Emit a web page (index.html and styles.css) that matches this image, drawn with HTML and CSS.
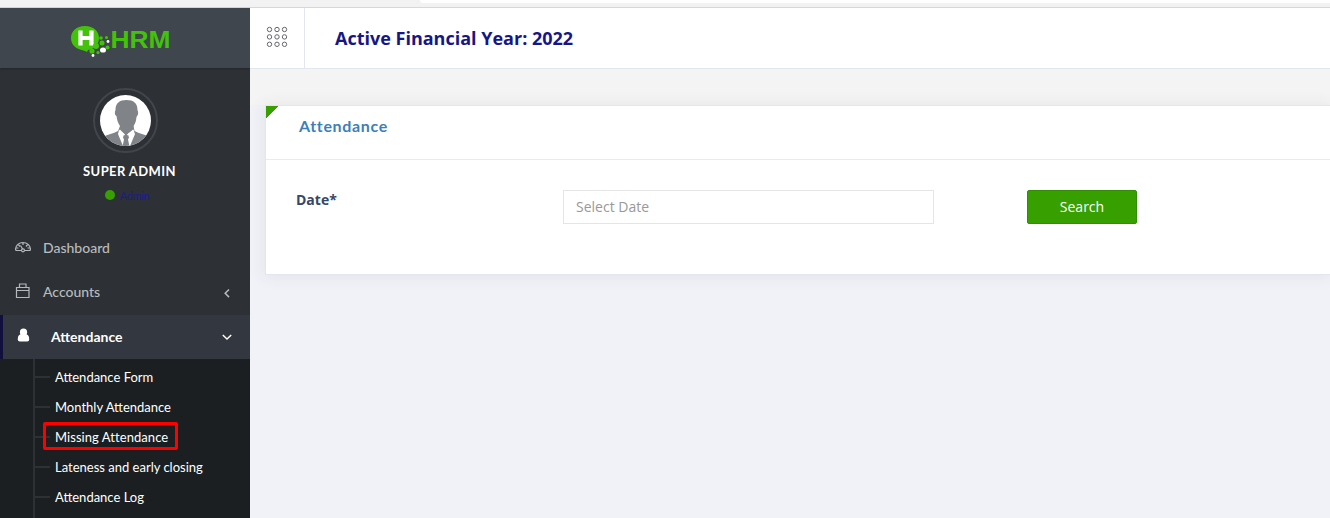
FILE: index.html
```html
<!DOCTYPE html>
<html lang="en">
<head>
<meta charset="utf-8">
<title>HRM - Attendance</title>
<link rel="stylesheet" href="styles.css">
</head>
<body>
<div class="browser-edge"><span class="address-bar"></span></div>
<div class="app">
  <aside class="sidebar">
    <div class="logo">
      <svg width="102" height="36" viewBox="0 0 102 36">
        <path fill="#43c20a" d="M15 2C6.500 2 1 7 1 14c0 6 4 10 9 11.500l5 1.500 2 1 1-2c6-1 11-5 11-12C29 7 23.500 2 15 2z"/>
        <path stroke="#fff" stroke-width="4.200" fill="none" d="M10.500 6.500v15M21.500 6.500v15M10 14h11"/>
        <g fill="#43c20a"><circle cx="31" cy="14" r="1.800"/><circle cx="36.500" cy="13.500" r="1.500"/><circle cx="32" cy="19" r="2.500"/><circle cx="26" cy="22" r="3"/><circle cx="37.500" cy="23.500" r="2"/><circle cx="22" cy="27" r="2.600"/><circle cx="28" cy="28.500" r="1.600"/></g>
        <g fill="#fff"><ellipse cx="33" cy="26" rx="3" ry="2.600"/><circle cx="38" cy="17.500" r="1.400"/><circle cx="23" cy="31.500" r="1.400"/></g>
        <text class="logo-text" x="40.500" y="31.500" textLength="60" lengthAdjust="spacingAndGlyphs" transform="translate(0 -8)">HRM</text>
      </svg>
    </div>
    <div class="profile">
      <div class="avatar">
        <svg width="51" height="51" viewBox="0 0 51 51">
          <defs><clipPath id="face"><circle cx="25.500" cy="25.500" r="25.500"/></clipPath></defs>
          <g clip-path="url(#face)">
            <path fill="#fff" d="M0 0h51v51H0z"/>
            <path fill="#808388" d="M3 42c5-3 10-3 15-6l2-5c-2-3-3-6-3.500-10C14 20 15 16 15.500 15c0-7 4-10 11-10S37.500 8 37.500 15c1 2 1 5-1 7-.5 4-1 6-3 9l1 5c5 3 10 3 15 6v9H3z"/>
            <path fill="#fff" d="M19 35l6.500 5 8-5 1.500 4-5 12h-7l-5-12z"/>
            <path fill="#808388" d="M20 30h13.500l-.5 5-7 5-6-5zM24 39.500h4l1 3-1 2 1.500 7h-7l1.500-7-1-2z"/>
            <path stroke="#fff" stroke-width="1.200" fill="none" d="M19.500 35l5 5M33.500 35l-6 5"/>
          </g>
        </svg>
      </div>
      <div class="name"><span>SUPER ADMIN</span></div>
      <div class="role"><i class="dot"></i><span>Admin</span></div>
    </div>
    <nav class="menu">
      <a class="item"><svg class="icon" width="18" height="16" viewBox="0 0 18 16"><g fill="none" stroke="#b5b9bd" stroke-width="1.200"><path d="M7.200 10.500H2L1.500 9C1.700 5.300 5 2.500 9 2.500s7.300 2.800 7.500 6.500l-.5 1.500h-5.200M9 2.500v2.500M4.300 4.500L6 6.500M13.700 4.500L12 6.500M1.800 8H4.500M16.200 8h-2.700M6.500 5.500L8.600 9"/><circle cx="9" cy="10.300" r="1.500"/></g></svg><span class="text">Dashboard</span></a>
      <a class="item"><svg class="icon raised" width="18" height="16" viewBox="0 0 18 16"><path fill="none" stroke="#b5b9bd" stroke-width="1.200" d="M2.500 4.500h12.500v10H2.500zM2.500 7.500h12.500M5.500 4.500v-3.500h6.500v3.500"/></svg><span class="text">Accounts</span><svg class="arrow" width="10" height="10" viewBox="0 0 10 10"><path d="M7 1.500L3.200 5.300 7 9.100"/></svg></a>
      <a class="item active"><svg class="icon raised" width="18" height="16" viewBox="0 0 18 16"><circle cx="8.500" cy="5.200" r="3.600" fill="#fff"/><path fill="#fff" d="M5.500 7.300C3.500 8 2.800 9.500 2.800 12.500q0 2 2 2h7.400q2 0 2-2c0-3-.7-4.500-2.700-5.200z"/></svg><span class="text">Attendance</span><svg class="arrow" width="10" height="10" viewBox="0 0 10 10"><path d="M.8 3L5 7 9.200 3"/></svg></a>
    </nav>
    <ul class="submenu">
      <li>Attendance Form</li>
      <li>Monthly Attendance</li>
      <li class="marked">Missing Attendance</li>
      <li>Lateness and early closing</li>
      <li>Attendance Log</li>
    </ul>
  </aside>
  <main class="main">
    <header class="topbar">
      <div class="toggle">
        <svg width="22" height="22" viewBox="0 0 22 22" fill="none" stroke="#64666b" stroke-width="1"><circle cx="3.500" cy="3.500" r="2.200"/><circle cx="11" cy="3.500" r="2.200"/><circle cx="18.500" cy="3.500" r="2.200"/><circle cx="3.500" cy="10.900" r="2.200"/><circle cx="11" cy="10.900" r="2.200"/><circle cx="18.500" cy="10.900" r="2.200"/><circle cx="3.500" cy="18.300" r="2.200"/><circle cx="11" cy="18.300" r="2.200"/><circle cx="18.500" cy="18.300" r="2.200"/></svg>
      </div>
      <div class="year">Active Financial Year: 2022</div>
    </header>
    <div class="spacer"></div>
    <section class="card">
      <h4 class="card-head"><span>Attendance</span></h4>
      <div class="form">
        <label class="label">Date*</label>
        <input class="date" type="text" placeholder="Select Date">
        <button class="search">Search</button>
      </div>
    </section>
  </main>
</div>
</body>
</html>
```
FILE: styles.css
```css
*, *::before, *::after { box-sizing: border-box; }
body { margin: 0; height: 518px; overflow: hidden; background: #f1f2f7; font-family: "Open Sans", sans-serif; }
.browser-edge { height: 8px; background: #f2f2f2; border-bottom: 1px solid #d5d7d9; padding-left: 420px; }
.address-bar { display: block; height: 3px; background: #fff; border-radius: 0 0 0 3px; }
.app { display: flex; height: 510px; }
.sidebar { width: 250px; flex: none; background: #2d3135; font-family: Lato, sans-serif; display: flex; flex-direction: column; }
.logo { height: 60px; background: #40464d; padding: 16px 0 0 70px; box-shadow: 0 1px 2px rgba(0,0,0,.25); flex: none; }
.logo svg { display: block; }
.logo-text { font: bold 24px "Liberation Sans", sans-serif; fill: #43c20a; }
.profile { height: 158px; flex: none; padding-top: 20px; display: flex; flex-direction: column; align-items: center; }
.avatar { width: 65px; height: 65px; border: 2px solid #42454a; border-radius: 50%; padding: 5px; }
.avatar svg { display: block; }
.name { height: 20px; margin: 8px 0 0 9px; line-height: 20px; font-size: 13px; font-weight: 700; color: #fff; letter-spacing: .4px; white-space: nowrap; }
.role { display: flex; align-items: center; gap: 5px; height: 16px; margin: 6px 0 0 4px; font-size: 11px; color: #1b1b8c; letter-spacing: -.4px; }
.dot { width: 10px; height: 10px; border-radius: 50%; background: #37a000; }
.menu { flex: none; }
.item { display: flex; align-items: center; height: 44px; padding: 0 18px 0 14px; font-size: 14px; font-weight: 500; color: #b8bcbf; }
.item + .item { height: 45px; }
.item .icon { margin-right: 11px; flex: none; }
.item .raised { margin-bottom: 4px; }
.text { padding-bottom: 2px; }
.menu .item.active { height: 44px; background: #33373f; border-left: 3px solid #11103c; padding-left: 12px; color: #fff; font-weight: 700; }
.item.active .icon { margin-right: 18px; }
.arrow { margin-left: auto; fill: none; stroke: currentColor; stroke-width: 1.500; }
.submenu { flex: 1; margin: 0; padding: 3px 0 0 33px; list-style: none; background: linear-gradient(90deg, transparent 33px, #2d3135 33px, #2d3135 35px, transparent 35px), #1c1f22; }
.submenu li { height: 30px; display: flex; align-items: center; font-size: 13px; color: #fff; white-space: nowrap; position: relative; }
.submenu li::before { content: ""; width: 17px; height: 2px; margin-right: 5px; background: #2d3135; }
.submenu .marked { letter-spacing: .06px; }
.marked::after { content: ""; position: absolute; left: 10px; top: 0; width: 135px; height: 28px; border: 3px solid #f00; border-radius: 2px; }
.main { flex: 1; min-width: 0; }
.topbar { height: 61px; display: flex; background: #fff; border-bottom: 1px solid #e1e6ef; }
.toggle { width: 55px; border-right: 1px solid #e1e6ef; padding: 18px 0 0 16px; }
.year { padding-left: 30px; line-height: 60px; font-size: 18px; font-weight: 700; color: #161687; }
.spacer { height: 36px; background: #f4f4f4; }
.card { height: 170px; margin: 0 0 0 15px; border: 1px solid #e1e6ef; border-right: 0; background: linear-gradient(135deg, #37a000 8.500px, transparent 8.500px) no-repeat, #fff; box-shadow: 0 1px 15px 1px rgba(69,65,78,.08); }
.card-head { margin: 0; height: 54px; border-bottom: 1px solid #e8ebf0; padding: 7px 0 0 33px; font: 700 16px/26px Lato, sans-serif; letter-spacing: .65px; color: #3c7fb9; }
.form { display: flex; padding: 30px 0 0 30px; }
.label { width: 267px; font-size: 14px; font-weight: 700; line-height: 20px; color: #374767; }
.date { width: 371px; height: 34px; border: 1px solid #e4e5e7; padding: 0 12px 2px; font: 14px "Open Sans", sans-serif; color: #555; }
.date::placeholder { color: #999; opacity: 1; }
.search { width: 110px; height: 34px; margin-left: 93px; padding: 0 0 2px; border: 1px solid #318d01; border-radius: 2px; background: #37a000; color: #fff; font: 14px "Open Sans", sans-serif; }
```
